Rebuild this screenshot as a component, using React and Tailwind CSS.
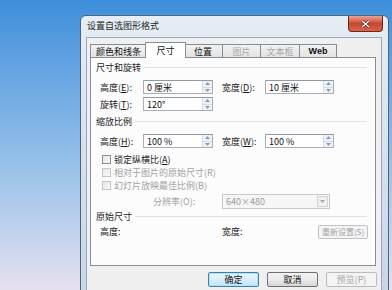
import React from 'react';

const font = "font-['Noto_Sans_CJK_SC','Noto_Sans_CJK_JP',sans-serif]";

const Acc = ({ children }) => <span className="underline underline-offset-1">{children}</span>;

const Spinner = () => (
  <div className="flex h-full w-[10px] flex-col border-l border-[#d5dde6] bg-[#eef2f6]">
    <div className="flex flex-1 items-center justify-center border-b border-[#d5dde6]">
      <svg width="5" height="3" viewBox="0 0 5 3"><path d="M2.5 0 L5 3 L0 3 Z" fill="#8c9cb0" /></svg>
    </div>
    <div className="flex flex-1 items-center justify-center">
      <svg width="5" height="3" viewBox="0 0 5 3"><path d="M0 0 L5 0 L2.5 3 Z" fill="#8c9cb0" /></svg>
    </div>
  </div>
);

const Field = ({ value, className = '' }) => (
  <div className={'flex h-[14px] items-stretch border border-[#abadb3] border-t-[#8e9aa8] bg-white ' + className}>
    <div className="flex flex-1 items-center pl-[3px] text-[9px] leading-none text-[#111]">{value}</div>
    <Spinner />
  </div>
);

const Label = ({ children, className = '' }) => (
  <div className={'shrink-0 text-[9px] leading-none text-[#1a1a1a] ' + className}>{children}</div>
);

const Heading = ({ children }) => (
  <div className="flex h-[12px] items-center">
    <span className="text-[9px] leading-none text-[#1a1a1a]">{children}</span>
    <div className="ml-[3px] mr-[8px] flex-1 border-t border-[#dfe3e8] border-b-white" />
  </div>
);

const Check = ({ label, disabled }) => (
  <div className="flex h-[13px] items-center pl-[6px]">
    <div className={'h-[9px] w-[9px] border bg-linear-to-br from-[#e6e6e6] to-[#fafafa] ' + (disabled ? 'border-[#c6c6c6]' : 'border-[#8f8f8f]')} />
    <span className={'ml-[3px] text-[9px] leading-none ' + (disabled ? 'text-[#a2a2a2]' : 'text-[#1a1a1a]')}>{label}</span>
  </div>
);

const Tab = ({ children, active, disabled, className = '' }) => (
  <div
    className={
      'flex items-center justify-center border border-b-0 border-[#898c95] text-[9px] leading-none ' +
      (active
        ? 'relative z-10 -mx-[2px] mb-[-1px] h-[16px] bg-white text-[#111] '
        : '-ml-px h-[13px] bg-linear-to-b from-[#f2f2f2] to-[#e3e3e3] ' + (disabled ? 'text-[#a8a8a8] ' : 'text-[#111] ')) +
      className
    }
  >
    {children}
  </div>
);

const Button = ({ children, primary, disabled, className = '' }) => (
  <div
    className={
      'flex h-[15px] w-[51px] items-center justify-center rounded-[2px] border text-[9px] leading-none ' +
      (disabled
        ? 'border-[#b8bcc0] bg-[#f4f4f4] text-[#a6a6a6] '
        : primary
        ? 'border-[#3c7fb1] bg-linear-to-b from-[#eaf6fd] via-[#d9f0fc] to-[#bee6fd] text-[#111] shadow-[inset_0_0_0_1px_#b6e2f8] '
        : 'border-[#707070] bg-linear-to-b from-[#f2f2f2] via-[#ebebeb] to-[#d6d6d6] text-[#111] ') +
      className
    }
  >
    {children}
  </div>
);

export default function App() {
  return (
    <div className={'h-[290px] w-[392px] overflow-hidden bg-linear-to-b from-[#3d8edb] via-[#93bfe8] via-55% to-[#e6e0f0] ' + font}>
      <div className="ml-[80px] mt-[15px] flex h-[290px] w-[309px] flex-col rounded-t-[6px] border border-[#4f6478] bg-linear-to-b from-[#e6edf4] to-[#c6d5e5]">
        <div className="flex h-[21px] items-start justify-between">
          <div className="mt-[5px] pl-[6px] text-[9px] leading-none text-[#1e1e1e]">设置自选图形格式</div>
          <div className="mr-[5px] flex h-[16px] w-[35px] items-center justify-center rounded-b-[4px] border border-t-0 border-[#6b2a20] bg-linear-to-b from-[#eba396] via-[#c9452f] to-[#d9644c]">
            <svg width="9" height="8" viewBox="0 0 9 8">
              <path d="M1 1 L8 7 M8 1 L1 7" stroke="#5a1a12" strokeWidth="2.6" />
              <path d="M1 1 L8 7 M8 1 L1 7" stroke="#fff" strokeWidth="1.5" />
            </svg>
          </div>
        </div>
        <div className="ml-[5px] flex h-[260px] w-[296px] flex-col border border-[#98a8ba] bg-[#f0f0f0] pl-[3px] pt-[3px]">
          <div className="flex h-[16px] items-end pl-px">
            <Tab className="w-[57px]">颜色和线条</Tab>
            <Tab active className="w-[41px]">尺寸</Tab>
            <Tab className="w-[40px]">位置</Tab>
            <Tab disabled className="w-[39px]">图片</Tab>
            <Tab disabled className="w-[40px]">文本框</Tab>
            <Tab className="w-[38px] font-['Liberation_Sans',sans-serif] text-[8px] font-bold">Web</Tab>
          </div>
          <div className="flex h-[209px] w-[286px] flex-col border border-[#898c95] bg-[#fcfcfc] pl-[5px] pt-[3px]">
            <Heading>尺寸和旋转</Heading>
            <div className="mt-[7px] flex h-[14px] items-center pl-[4px]">
              <Label className="w-[43px]">高度(<Acc>E</Acc>):</Label>
              <Field value="0 厘米" className="w-[70px]" />
              <Label className="ml-[9px] w-[43px]">宽度(<Acc>D</Acc>):</Label>
              <Field value="10 厘米" className="w-[69px]" />
            </div>
            <div className="mt-[3px] flex h-[14px] items-center pl-[4px]">
              <Label className="w-[43px]">旋转(<Acc>T</Acc>):</Label>
              <Field value="120°" className="w-[70px]" />
            </div>
            <div className="mt-[4px]">
              <Heading>缩放比例</Heading>
            </div>
            <div className="mt-[7px] flex h-[14px] items-center pl-[4px]">
              <Label className="w-[43px]">高度(<Acc>H</Acc>):</Label>
              <Field value="100 %" className="w-[70px]" />
              <Label className="ml-[9px] w-[43px]">宽度(<Acc>W</Acc>):</Label>
              <Field value="100 %" className="w-[69px]" />
            </div>
            <div className="mt-[5px] flex flex-col">
              <Check label={<>锁定纵横比(<Acc>A</Acc>)</>} />
              <Check disabled label="相对于图片的原始尺寸(R)" />
              <Check disabled label="幻灯片放映最佳比例(B)" />
            </div>
            <div className="mt-[2px] flex h-[15px] items-center">
              <Label className="ml-[57px] w-[69px] !text-[#a2a2a2]">分辨率(O):</Label>
              <div className="flex h-[15px] w-[108px] items-stretch border border-[#c9c9c9] bg-[#f6f6f6]">
                <div className="flex flex-1 items-center pl-[3px] text-[9px] leading-none text-[#9a9a9a]">640×480</div>
                <div className="m-px flex w-[11px] items-center justify-center border border-[#d2d2d2] bg-[#f0f0f0]">
                  <svg width="5" height="3" viewBox="0 0 5 3"><path d="M0 0 L5 0 L2.5 3 Z" fill="#a8a8a8" /></svg>
                </div>
              </div>
            </div>
            <div className="mt-[1px]">
              <Heading>原始尺寸</Heading>
            </div>
            <div className="mt-[2px] flex h-[15px] items-center pl-[4px]">
              <Label className="w-[122px]">高度:</Label>
              <Label className="w-[96px]">宽度:</Label>
              <div className="flex h-[14px] w-[50px] items-center justify-center rounded-[2px] border border-[#c0c4c8] bg-[#f4f4f4] text-[8px] leading-none text-[#a6a6a6]">重新设置(S)</div>
            </div>
          </div>
          <div className="mt-[6px] flex justify-end gap-[8px] pr-[4px]">
            <Button primary>确定</Button>
            <Button>取消</Button>
            <Button disabled>预览(P)</Button>
          </div>
        </div>
      </div>
    </div>
  );
}
